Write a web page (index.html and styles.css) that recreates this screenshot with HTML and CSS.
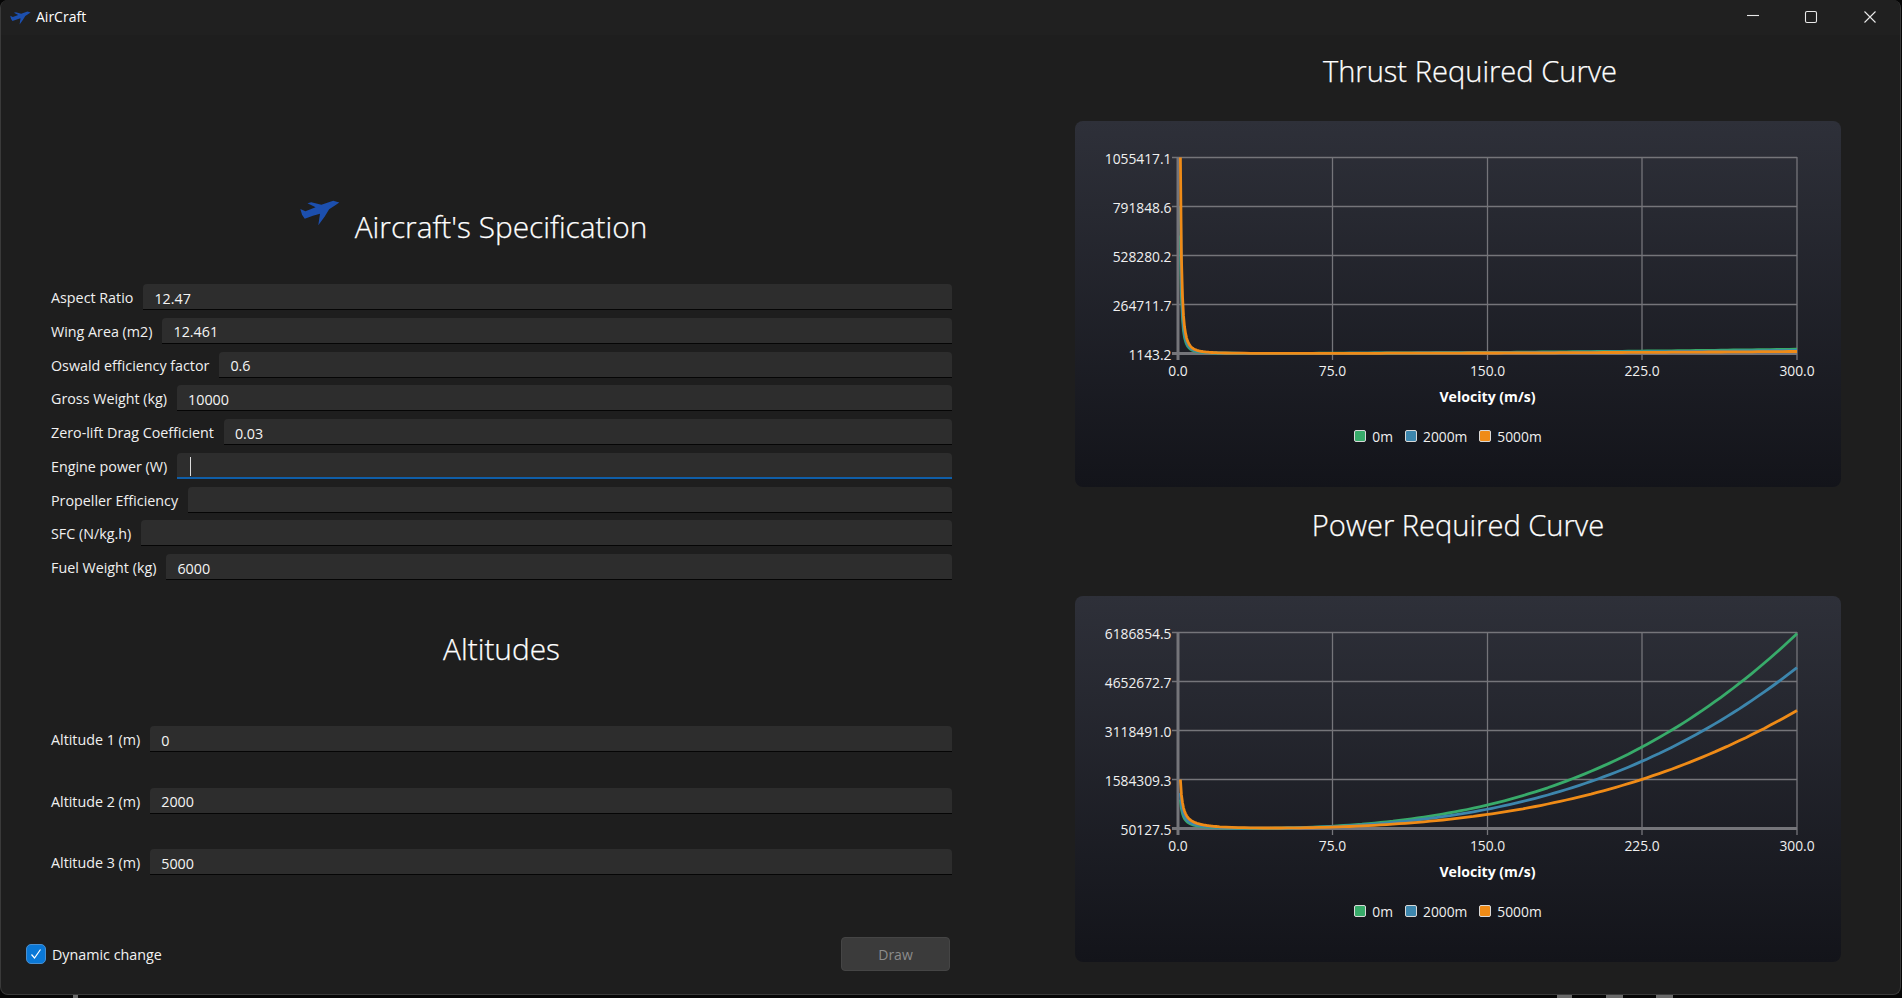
FILE: index.html
```html
<!DOCTYPE html>
<html>
<head>
<meta charset="utf-8">
<title>AirCraft</title>
<link rel="stylesheet" href="styles.css">
</head>
<body>

<svg class="defs" width="0" height="0">
  <symbol id="plane" viewBox="62 58 118 76">
    <path d="M178 65 L165 74 L148 85 L135 106 L116 132 L121 98 L100 104 L76 113 L68 101 L63 84 L78 91 L108 79 L84 67 L95 64 L125 72 L160 60 Z"/>
  </symbol>
</svg>

<div class="window">

  <div class="titlebar">
    <svg class="title-icon"><use href="#plane"/></svg>
    <span class="title-text">AirCraft</span>
    <div class="win-btns">
      <button class="win-btn"><svg width="14" height="14" viewBox="0 0 14 14"><path d="M1 5.5 H13"/></svg></button>
      <button class="win-btn"><svg width="14" height="14" viewBox="0 0 14 14"><rect x="1.5" y="1.5" width="11" height="11" rx="1.5"/></svg></button>
      <button class="win-btn"><svg width="14" height="14" viewBox="0 0 14 14"><path d="M1.5 1.5 L12.5 12.5 M12.5 1.5 L1.5 12.5"/></svg></button>
    </div>
  </div>

  <div class="content">

    <div class="left">
      <div class="form">
        <div class="spec-head">
          <svg class="spec-icon"><use href="#plane"/></svg>
          <h2>Aircraft's Specification</h2>
        </div>

        <div class="spec-rows">
          <div class="row"><label>Aspect Ratio</label><div class="field"><input type="text" value="12.47"></div></div>
          <div class="row"><label>Wing Area (m2)</label><div class="field"><input type="text" value="12.461"></div></div>
          <div class="row"><label>Oswald efficiency factor</label><div class="field"><input type="text" value="0.6"></div></div>
          <div class="row"><label>Gross Weight (kg)</label><div class="field"><input type="text" value="10000"></div></div>
          <div class="row"><label>Zero-lift Drag Coefficient</label><div class="field"><input type="text" value="0.03"></div></div>
          <div class="row"><label>Engine power (W)</label><div class="field active"><input type="text"><span class="caret"></span></div></div>
          <div class="row"><label>Propeller Efficiency</label><div class="field"><input type="text"></div></div>
          <div class="row"><label>SFC (N/kg.h)</label><div class="field"><input type="text"></div></div>
          <div class="row"><label>Fuel Weight (kg)</label><div class="field"><input type="text" value="6000"></div></div>
        </div>

        <h2 class="alt-title">Altitudes</h2>

        <div class="alt-rows">
          <div class="row"><label>Altitude 1 (m)</label><div class="field"><input type="text" value="0"></div></div>
          <div class="row"><label>Altitude 2 (m)</label><div class="field"><input type="text" value="2000"></div></div>
          <div class="row"><label>Altitude 3 (m)</label><div class="field"><input type="text" value="5000"></div></div>
        </div>
      </div>

      <div class="footer">
        <div class="check">
          <span class="check-box"><svg width="14" height="14" viewBox="0 0 14 14"><path d="M2.5 7.5 L5.5 11 L11.5 2.5"/></svg></span>
          <span class="check-text">Dynamic change</span>
        </div>
        <button class="draw-btn">Draw</button>
      </div>
    </div>

    <div class="right">
      <h2 class="chart-title first">Thrust Required Curve</h2>
      <div class="card">
        <svg class="plot" width="766" height="300" viewBox="0 0 766 300">
          <g class="grid">
            <line x1="97" y1="36.5" x2="722" y2="36.5"/>
            <line x1="97" y1="85.5" x2="722" y2="85.5"/>
            <line x1="97" y1="134.5" x2="722" y2="134.5"/>
            <line x1="97" y1="183.5" x2="722" y2="183.5"/>
            <line x1="257.5" y1="36" x2="257.5" y2="239"/>
            <line x1="412.5" y1="36" x2="412.5" y2="239"/>
            <line x1="567" y1="36" x2="567" y2="239"/>
            <line x1="722" y1="36" x2="722" y2="239"/>
          </g>
          <g class="axis">
            <line x1="103" y1="36" x2="103" y2="239"/>
            <line x1="97" y1="232.5" x2="722" y2="232.5"/>
          </g>
          <g class="y-labels">
            <text x="96.5" y="42.5">1055417.1</text>
            <text x="96.5" y="91.5">791848.6</text>
            <text x="96.5" y="140.5">528280.2</text>
            <text x="96.5" y="189.5">264711.7</text>
            <text x="96.5" y="238.5">1143.2</text>
          </g>
          <g class="x-labels">
            <text x="103" y="255">0.0</text>
            <text x="257.5" y="255">75.0</text>
            <text x="412.5" y="255">150.0</text>
            <text x="567" y="255">225.0</text>
            <text x="722" y="255">300.0</text>
          </g>
          <text class="x-title" x="412.5" y="281">Velocity (m/s)</text>
          <g id="thrust-curves"></g>
        </svg>
        <div class="legend">
          <span class="swatch green"></span><span class="legend-text">0m</span>
          <span class="swatch blue"></span><span class="legend-text">2000m</span>
          <span class="swatch orange"></span><span class="legend-text">5000m</span>
        </div>
      </div>

      <h2 class="chart-title">Power Required Curve</h2>
      <div class="card">
        <svg class="plot" width="766" height="300" viewBox="0 0 766 300">
          <g class="grid">
            <line x1="97" y1="36.5" x2="722" y2="36.5"/>
            <line x1="97" y1="85.5" x2="722" y2="85.5"/>
            <line x1="97" y1="134.5" x2="722" y2="134.5"/>
            <line x1="97" y1="183.5" x2="722" y2="183.5"/>
            <line x1="257.5" y1="36" x2="257.5" y2="239"/>
            <line x1="412.5" y1="36" x2="412.5" y2="239"/>
            <line x1="567" y1="36" x2="567" y2="239"/>
            <line x1="722" y1="36" x2="722" y2="239"/>
          </g>
          <g class="axis">
            <line x1="103" y1="36" x2="103" y2="239"/>
            <line x1="97" y1="232.5" x2="722" y2="232.5"/>
          </g>
          <g class="y-labels">
            <text x="96.5" y="42.5">6186854.5</text>
            <text x="96.5" y="91.5">4652672.7</text>
            <text x="96.5" y="140.5">3118491.0</text>
            <text x="96.5" y="189.5">1584309.3</text>
            <text x="96.5" y="238.5">50127.5</text>
          </g>
          <g class="x-labels">
            <text x="103" y="255">0.0</text>
            <text x="257.5" y="255">75.0</text>
            <text x="412.5" y="255">150.0</text>
            <text x="567" y="255">225.0</text>
            <text x="722" y="255">300.0</text>
          </g>
          <text class="x-title" x="412.5" y="281">Velocity (m/s)</text>
          <g id="power-curves"></g>
        </svg>
        <div class="legend">
          <span class="swatch green"></span><span class="legend-text">0m</span>
          <span class="swatch blue"></span><span class="legend-text">2000m</span>
          <span class="swatch orange"></span><span class="legend-text">5000m</span>
        </div>
      </div>
    </div>

  </div>
</div>

<!-- bits of the desktop showing under the window -->
<div class="desktop">
  <span class="speck s1"></span>
  <span class="speck s2"></span>
  <span class="speck s3"></span>
  <span class="speck s4"></span>
</div>

<script src="charts.js"></script>
</body>
</html>
```
FILE: styles.css
```css
*{
box-sizing: border-box;
}
body{
margin: 0;
background-color: #060606;
color: #f2f2f2;
font-family: "Open Sans", "Liberation Sans", sans-serif;
font-size: 14.3px;
overflow: hidden;
}
.defs{
position: absolute;
}
.window{
width: 1901px;
height: 995px;
background-color: #1e1e1e;
border: 1px solid #3a3a3a;
border-top: none;
border-radius: 8px;
overflow: hidden;
}

/* title bar */
.titlebar{
display: flex;
align-items: center;
height: 35px;
background-color: #202020;
padding-left: 9px;
}
.title-icon{
width: 21px;
height: 14px;
fill: #1c4fae;
}
.title-text{
margin-left: 5px;
padding-bottom: 2px;
color: #fff;
font-size: 14px;
}
.win-btns{
display: flex;
margin-left: auto;
margin-right: 1px;
}
.win-btn{
display: flex;
align-items: center;
justify-content: center;
width: 58.5px;
height: 35px;
padding: 0 0 2px 0;
background: none;
border: none;
}
.win-btn svg{
fill: none;
stroke: #e8e8e8;
stroke-width: 1.1;
}

.content{
display: flex;
}

/* left side, form */
.left{
width: 951px;
padding-left: 25px;
}
.form{
padding-left: 25px;
}
.spec-head{
display: flex;
justify-content: center;
align-items: flex-start;
margin-top: 165px;
padding-right: 56px;
}
.spec-icon{
width: 40px;
height: 26px;
fill: #1c4fae;
margin-right: 15px;
}
h2{
margin: 0;
font-size: 29.8px;
font-weight: 300;
line-height: 40px;
color: #fff;
-webkit-text-stroke: 0.25px #fff;
}
.spec-head h2{
margin-top: 7px;
}
.spec-rows{
display: flex;
flex-direction: column;
gap: 7.75px;
margin-top: 37px;
}
.alt-title{
margin-top: 49px;
text-align: center;
}
.alt-rows{
display: flex;
flex-direction: column;
gap: 35.5px;
margin-top: 57px;
}
.row{
display: flex;
align-items: center;
height: 26px;
}
label{
margin-right: 10px;
padding-top: 1px;
color: #f0f0f0;
white-space: nowrap;
}
.field{
position: relative;
flex: 1;
height: 26px;
background-color: #2d2d2d;
border-bottom: 1px solid #050505;
border-radius: 4px 4px 0 0;
}
.field.active{
border-bottom: 2px solid #0f5ea8;
}
input{
width: 100%;
height: 25px;
padding: 3px 11px 0 11px;
background: none;
border: none;
outline: none;
color: #f4f4f4;
font-family: inherit;
font-size: 14.3px;
}
.caret{
position: absolute;
left: 13px;
top: 4px;
width: 1px;
height: 19px;
background-color: #ddd;
}

/* bottom of the left side */
.footer{
display: flex;
align-items: center;
justify-content: space-between;
margin-top: 62px;
padding-right: 2px;
}
.check{
display: flex;
align-items: center;
gap: 6px;
}
.check-text{
padding-top: 1px;
}
.check-box{
display: flex;
align-items: center;
justify-content: center;
width: 20px;
height: 20px;
background-color: #0a78d7;
border: 1px solid #4a8fcf;
border-radius: 5px;
}
.check-box svg{
fill: none;
stroke: #fff;
stroke-width: 1.2;
}
.draw-btn{
width: 109px;
height: 34px;
background-color: #3b3b3b;
border: 1px solid #454545;
border-radius: 4px;
color: #8c8c8c;
font-family: inherit;
font-size: 14px;
}

/* right side, charts */
.right{
width: 766px;
margin-left: 123px;
}
.chart-title{
padding-top: 18px;
padding-bottom: 51px;
font-size: 29.1px;
text-align: center;
line-height: 40px;
}
.chart-title.first{
padding-top: 16px;
padding-bottom: 30px;
padding-left: 24px;
}
.card{
height: 366px;
background: linear-gradient(#2e3039, #13141a);
border-radius: 8px;
}
.plot{
display: block;
}
.grid line{
stroke: #75757a;
stroke-width: 1.3;
}
.axis line{
stroke: #75757a;
stroke-width: 3;
}
.y-labels text{
fill: #f0f0f0;
font-size: 13.8px;
text-anchor: end;
}
.x-labels text{
fill: #f0f0f0;
font-size: 13.8px;
text-anchor: middle;
}
.x-title{
fill: #fff;
font-size: 14.1px;
font-weight: 700;
text-anchor: middle;
}
.curve{
fill: none;
stroke-width: 2.8;
stroke-linejoin: round;
}
.legend{
display: flex;
align-items: center;
justify-content: center;
height: 32px;
margin-top: -1px;
padding-right: 8px;
}
.swatch{
width: 12px;
height: 12px;
border: 1px solid #d8d8d8;
border-radius: 2px;
margin-right: 6px;
}
.legend-text{
margin-right: 12px;
color: #f0f0f0;
font-size: 13.8px;
}
.green{
background-color: #38ab6a;
}
.blue{
background-color: #3d86ad;
}
.orange{
background-color: #ef8b17;
}

/* desktop under the window */
.desktop{
position: relative;
height: 3px;
}
.speck{
position: absolute;
top: 0;
height: 3px;
background-color: #6a6a6a;
}
.s1{
left: 1557px;
width: 15px;
}
.s2{
left: 1606px;
width: 17px;
}
.s3{
left: 1656px;
width: 17px;
}
.s4{
left: 73px;
width: 5px;
}
```
FILE: charts.js
```js
// curves of both charts, in svg pixels of the plot area
var x0 = 103;
var baseY = 232.5;
var perMs = (722 - 103) / 300;
var startV = 1.17;

var colors = { green: '#38ab6a', blue: '#3d86ad', orange: '#ef8b17' };

function speeds() {
  var list = [];
  var v = startV;
  while (v < 300) {
    list.push(v);
    v += v < 20 ? 0.5 : 3;
  }
  list.push(300);
  return list;
}

function addCurve(groupId, color, heightAt) {
  var group = document.getElementById(groupId);
  var line = document.createElementNS('http://www.w3.org/2000/svg', 'polyline');
  var points = speeds().map(function (v) {
    return (x0 + v * perMs).toFixed(1) + ',' + (baseY - heightAt(v)).toFixed(1);
  });
  line.setAttribute('points', points.join(' '));
  line.setAttribute('class', 'curve');
  line.setAttribute('stroke', color);
  group.appendChild(line);
}

function thrust(end, start) {
  return function (v) {
    return end * Math.pow(v / 300, 2) + start * Math.pow(startV / v, 2);
  };
}

// the power curves dip right down to the axis around 50 m/s
function power(end, start) {
  return function (v) {
    return Math.max(0, end * Math.pow(v / 300, 3) + start * (startV / v) - 1.2);
  };
}

addCurve('thrust-curves', colors.green, thrust(4.3, 118));
addCurve('thrust-curves', colors.blue, thrust(3, 147));
addCurve('thrust-curves', colors.orange, thrust(2, 196));

addCurve('power-curves', colors.green, power(196, 30));
addCurve('power-curves', colors.blue, power(162, 36.7));
addCurve('power-curves', colors.orange, power(119, 50));
```
